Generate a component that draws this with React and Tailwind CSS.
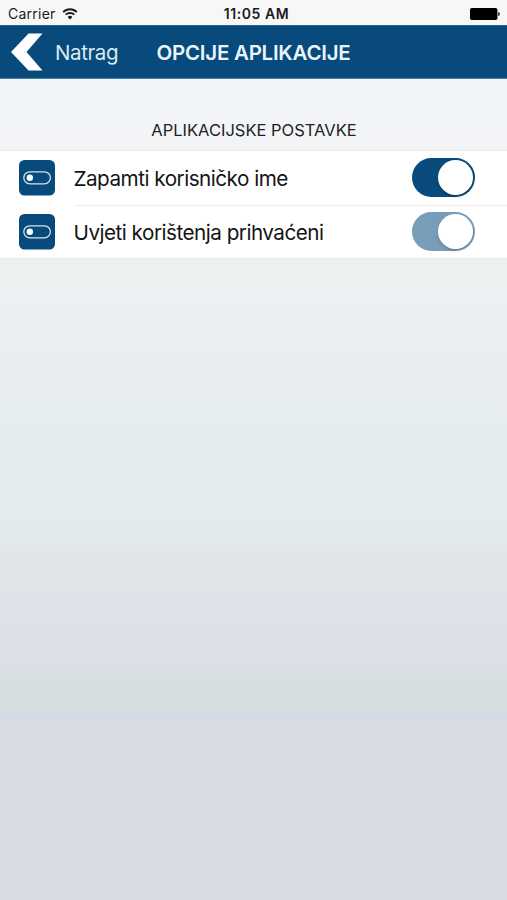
import { useState } from "react";

const SETTINGS = [
  { id: "remember", label: "Zapamti korisničko ime", on: true, locked: false },
  { id: "terms", label: "Uvjeti korištenja prihvaćeni", on: true, locked: true },
];

function WifiIcon() {
  return (
    <svg width="16" height="12" viewBox="0 0 16 12" fill="none" stroke="#1c1c1c" strokeWidth="1.9">
      <path d="M1.2 4.1a9.6 9.6 0 0 1 13.6 0" />
      <path d="M3.7 6.7a6.1 6.1 0 0 1 8.6 0" />
      <path d="M8 11.5 5.6 9a3.4 3.4 0 0 1 4.8 0z" fill="#1c1c1c" stroke="none" />
    </svg>
  );
}

function BatteryIcon() {
  return (
    <svg width="30" height="12" viewBox="0 0 30 12">
      <rect width="27.4" height="12" rx="1.8" fill="#000" />
      <path d="M28.2 4c1.1.4 1.6 1.1 1.6 2s-.5 1.6-1.6 2z" fill="#222" />
    </svg>
  );
}

function StatusBar() {
  return (
    <div className="grid h-[25px] grid-cols-3 items-center bg-[#f7f7f7] pt-[2px] pr-[7px] pl-2 text-[14px] leading-none text-[#1c1c1c]">
      <div className="flex items-center gap-[6px]">
        <span className="tracking-[0.25px]">Carrier</span>
        <WifiIcon />
      </div>
      <span className="pl-[5px] text-center font-semibold tracking-[0.55px]">11:05 AM</span>
      <div className="flex justify-end">
        <BatteryIcon />
      </div>
    </div>
  );
}

function NavBar() {
  return (
    <header className="flex h-[54px] items-center border-y border-t-[#2a6590] border-b-[#4a7da2] bg-[#074a7b] pl-[11px] text-[20.5px] leading-none">
      <button className="flex items-center gap-3 text-[#dce9f2]">
        <svg width="32" height="38" viewBox="0 0 32 38" fill="#fff">
          <path d="M17.5 0.5H31.5L15.5 19L31.5 37.5H17.5L0 19z" />
        </svg>
        <span className="w-[65px] pt-[2px] text-left tracking-[-0.4px]">Natrag</span>
      </button>
      <h1 className="ml-[36.5px] pt-[2px] font-semibold tracking-[-0.25px] whitespace-nowrap text-[#eaf4fb]">
        OPCIJE APLIKACIJE
      </h1>
    </header>
  );
}

function SettingIcon() {
  return (
    <svg width="36" height="36" viewBox="0 0 36 36" fill="none">
      <rect width="36" height="35.5" rx="5.5" fill="#074a7b" />
      <rect x="4.8" y="11.8" width="26.6" height="12" rx="6" stroke="#d5e3ed" strokeWidth="1.3" />
      <circle cx="10.8" cy="17.8" r="3.2" fill="#fff" />
    </svg>
  );
}

function Toggle({ on, locked, onChange }) {
  return (
    <button
      role="switch"
      aria-checked={on}
      disabled={locked}
      onClick={onChange}
      className={`mb-px flex h-[39px] w-[63.5px] items-center rounded-full px-[2px] ${on ? "justify-end" : "justify-start"} ${
        !on ? "bg-[#d8dce0]" : locked ? "bg-[#779db9]" : "bg-[#074a7b]"
      }`}
    >
      <span className="size-[35px] rounded-full bg-white shadow-[0_2px_3px_rgba(0,0,0,0.15)]" />
    </button>
  );
}

export default function App() {
  const [settings, setSettings] = useState(SETTINGS);

  const toggle = (id) =>
    setSettings((list) => list.map((s) => (s.id === id ? { ...s, on: !s.on } : s)));

  return (
    <div className="flex h-screen flex-col bg-[linear-gradient(#f3f6f9_79px,#f2f4f6_150px,#ecf0f0_259px,#ebf0f2_304px,#ebeff1_350px,#e8ecf0_354px,#e8edef_400px,#e4edee_434px,#e3ebec_520px,#e3e8eb_545px,#dfe5e6_565px,#dfe5e5_593px,#dee3eb_596px,#dce1e9_650px,#dbdfe6_665px,#d8dfe1_680px,#d6dee0_709px,#d7dbe4_713px,#d7dbe4_900px)] font-[Inter,'Liberation_Sans',sans-serif]">
      <StatusBar />
      <NavBar />
      <main>
        <h2 className="flex h-[71px] items-end justify-center pb-[10px] pl-px text-[16.5px] leading-[19px] text-[#222]">
          APLIKACIJSKE POSTAVKE
        </h2>
        <ul className="border-y border-[#e6e9eb] bg-white">
          {settings.map((s, i) => (
            <li key={s.id} className="flex items-center pl-[19px]">
              <SettingIcon />
              <div
                className={`ml-[18.5px] flex flex-1 items-center justify-between pr-8 ${
                  i > 0 ? "h-[53px] border-t border-[#ececee]" : "h-[54px]"
                }`}
              >
                <span className="pt-[3px] text-[20.7px] leading-none tracking-[-0.51px] whitespace-nowrap text-[#151515]">
                  {s.label}
                </span>
                <Toggle on={s.on} locked={s.locked} onChange={() => toggle(s.id)} />
              </div>
            </li>
          ))}
        </ul>
      </main>
    </div>
  );
}
